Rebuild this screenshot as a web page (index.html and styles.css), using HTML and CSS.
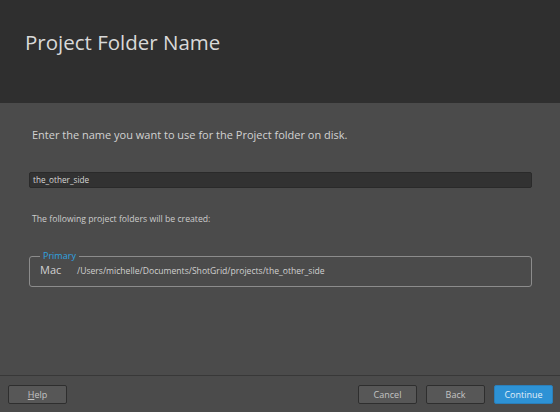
FILE: index.html
```html
<!DOCTYPE html>
<html>
<head>
<meta charset="utf-8">
<link rel="stylesheet" href="styles.css">
</head>
<body>
<div class="app">
  <header class="header">
    <h1 class="title">Project Folder Name</h1>
  </header>
  <main class="content">
    <p class="intro">Enter the name you want to use for the Project folder on disk.</p>
    <div class="input">the_other_side</div>
    <p class="note">The following project folders will be created:</p>
    <fieldset class="group">
      <legend class="legend">Primary</legend>
      <div class="row"><span class="os">Mac</span><span class="path">/Users/michelle/Documents/ShotGrid/projects/the_other_side</span></div>
    </fieldset>
  </main>
  <footer class="footer">
    <button class="btn"><u>H</u>elp</button>
    <div class="spacer"></div>
    <button class="btn">Cancel</button>
    <button class="btn">Back</button>
    <button class="btn primary">Continue</button>
  </footer>
</div>
</body>
</html>
```
FILE: styles.css
```css
html, body {
  margin: 0;
  padding: 0;
  background: #4b4b4b;
}
.app {
  width: 560px;
  height: 412px;
  display: flex;
  flex-direction: column;
  font-family: "Open Sans", "Liberation Sans", sans-serif;
  background: #4b4b4b;
}
.header {
  height: 103px;
  background: #2f2f2f;
  box-sizing: border-box;
  padding: 28px 0 0 25px;
}
.title {
  margin: 0;
  font-size: 20.5px;
  font-weight: 400;
  line-height: 29px;
  color: #d9d9d9;
}
.content {
  flex: 1;
  padding: 24px 28px 0 29px;
}
.intro {
  margin: 0 0 0 3px;
  font-size: 11px;
  line-height: 15px;
  color: #d2d2d2;
}
.input {
  margin-top: 30px;
  height: 16px;
  box-sizing: border-box;
  background: #323232;
  border: 1px solid #2a2a2a;
  border-radius: 2px;
  font-size: 8.2px;
  line-height: 14px;
  padding-left: 3px;
  color: #d6d6d6;
}
.note {
  margin: 25px 0 0 3px;
  font-size: 8.7px;
  line-height: 12px;
  color: #cccccc;
}
.group {
  margin: 25px 0 0 0;
  border: 1px solid #8c8c8c;
  border-radius: 3px;
  padding: 0 10px 7px 10px;
}
.legend {
  padding: 0 3px;
  font-size: 9px;
  line-height: 12px;
  color: #2fa3e0;
}
.row {
  display: flex;
  align-items: baseline;
  line-height: 15px;
}
.os {
  width: 37px;
  font-size: 11px;
  color: #d0d0d0;
}
.path {
  font-size: 8.6px;
  color: #d0d0d0;
}
.footer {
  height: 37px;
  box-sizing: border-box;
  border-top: 1px solid #383838;
  display: flex;
  align-items: flex-start;
  gap: 9px;
  padding: 9px 7px 0 8px;
}
.spacer {
  flex: 1;
}
.btn {
  width: 59px;
  height: 19px;
  box-sizing: border-box;
  background: #575757;
  border: 1px solid #2e2e2e;
  border-radius: 2px;
  font-family: "Open Sans", "Liberation Sans", sans-serif;
  font-size: 9px;
  color: #c4c4c4;
  padding: 0;
}
.btn u {
  text-decoration-thickness: 1px;
}
.primary {
  background: #2d92d5;
  border-color: #2a7fba;
  color: #e0eef8;
}
```
